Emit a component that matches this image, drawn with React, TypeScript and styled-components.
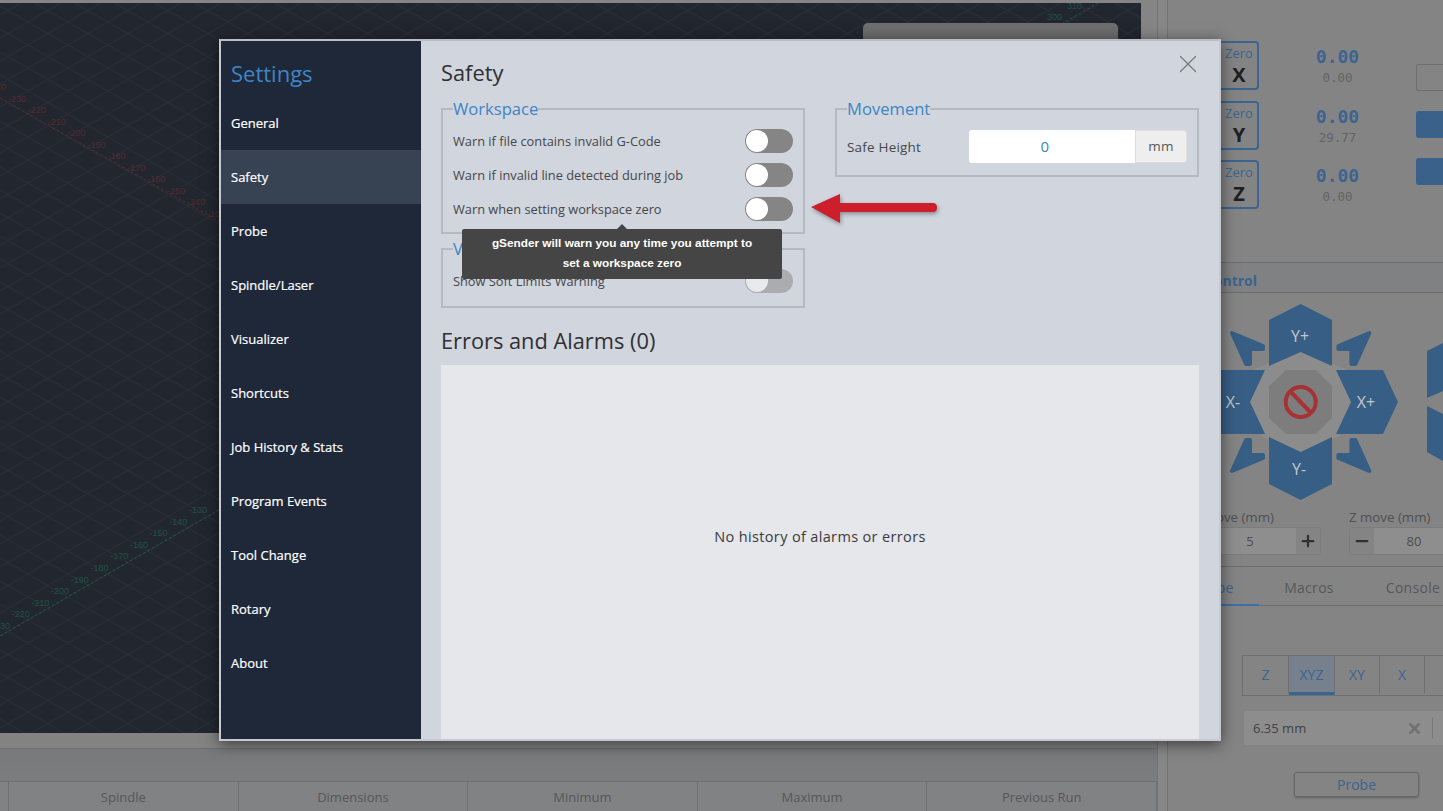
import React from 'react';
import styled, { createGlobalStyle } from 'styled-components';
import { Minus, Plus, X } from 'lucide-react';

const GlobalStyle = createGlobalStyle`
    * {
        box-sizing: border-box;
    }
    html, body {
        margin: 0;
        padding: 0;
        height: 811px;
        overflow: hidden;
        font-family: 'Open Sans', 'Liberation Sans', sans-serif;
    }
`;

const Page = styled.div`
    position: relative;
    display: grid;
    grid-template-columns: 1157px 11px 275px;
    width: 1443px;
    height: 811px;
    overflow: hidden;
    background: #848484;
`;

const MainColumn = styled.div`
    display: flex;
    flex-direction: column;
    height: 811px;
`;

const VisualizerRow = styled.div`
    display: flex;
    height: 733px;
    padding-top: 3px;
    padding-right: 16px;
    background: #858585;
`;

const Visualizer = styled.div`
    position: relative;
    width: 1141px;
    height: 730px;
    background: #22262f;
`;

const Canvas = styled.svg`
    display: block;
    width: 1141px;
    height: 730px;
`;

const FileCard = styled.div`
    position: absolute;
    top: 20px;
    left: 863px;
    width: 255px;
    height: 60px;
    border-radius: 5px;
    background: linear-gradient(#6f6f70, #5b5c5e);
`;

const StatusStrip = styled.div`
    height: 16px;
    background: #838383;
    border-bottom: 1px solid #6d6e70;
`;

const ProgressStrip = styled.div`
    height: 33px;
    background: linear-gradient(#78797b, #7c7d7f);
    border-bottom: 1px solid #6f7072;
`;

const StatsHeader = styled.div`
    display: grid;
    grid-template-columns: 9px repeat(5, 1fr);
    height: 29px;
    background: #818284;
`;

const StatsCell = styled.div`
    display: flex;
    align-items: center;
    justify-content: center;
    border-right: 1px solid #707173;
    font-size: 13px;
    color: #565759;
`;

const Splitter = styled.div`
    background: #878787;
    border-left: 1px solid #737476;
    border-right: 1px solid #737476;
`;

const SidePanel = styled.div`
    display: flex;
    flex-direction: column;
    overflow: hidden;
    height: 811px;
    background: #848485;
`;

const DroSection = styled.div`
    display: grid;
    grid-template-columns: 248px 27px;
    height: 263px;
    padding-top: 41px;
    border-bottom: 1px solid #6c6d6f;
`;

const DroRows = styled.div`
    display: grid;
    grid-template-rows: 60px 59px 48px;
`;

const DroRow = styled.div`
    display: grid;
    grid-template-columns: 91px 157px;
    align-items: start;
`;

const ZeroButton = styled.div`
    display: flex;
    flex-direction: column;
    align-items: center;
    justify-content: center;
    height: 49px;
    border: 2px solid #3b6490;
    border-radius: 4px;
    padding-left: 51px;
    color: #3b6490;
    font-size: 13px;
    line-height: 19px;
`;

const ZeroAxis = styled.span`
    color: #1f2021;
    font-size: 20px;
    font-weight: 700;
    line-height: 24px;
`;

const DroValues = styled.div`
    display: flex;
    flex-direction: column;
    align-items: center;
    padding-top: 4px;
    font-family: 'DejaVu Sans Mono', 'Liberation Mono', monospace;
`;

const WorkValue = styled.span`
    color: #3b6490;
    font-size: 18px;
    font-weight: 700;
    line-height: 24px;
`;

const MachineValue = styled.span`
    color: #626364;
    font-size: 12.5px;
    line-height: 18px;
`;

const DroActions = styled.div`
    display: flex;
    flex-direction: column;
    gap: 20px;
    padding-top: 23px;
`;

const DroAction = styled.div<{ $filled?: boolean }>`
    height: 27px;
    border-radius: 3px 0 0 3px;
    border: 1px solid ${(p) => (p.$filled ? '#3a6189' : '#6e6f71')};
    border-right: none;
    background: ${(p) => (p.$filled ? '#3a6189' : 'transparent')};
`;

const JogHeader = styled.div`
    height: 30px;
    padding: 8px 0 0 12px;
    border-bottom: 1px solid #6c6d6f;
    font-size: 14px;
    font-weight: 700;
    line-height: 20px;
    color: #3b6490;
    background: #808183;
`;

const JogPad = styled.svg`
    display: block;
    width: 275px;
    height: 215px;
`;

const MoveRow = styled.div`
    display: grid;
    grid-template-columns: 153px 1fr;
    column-gap: 28px;
    height: 59px;
    border-bottom: 1px solid #6c6d6f;
`;

const MoveField = styled.div`
    display: flex;
    flex-direction: column;
`;

const MoveLabel = styled.div<{ $inset?: number }>`
    height: 19px;
    padding-left: ${(p) => p.$inset ?? 0}px;
    font-size: 13.3px;
    line-height: 18px;
    white-space: nowrap;
    color: #4f5052;
`;

const Stepper = styled.div<{ $offset?: number; $width: number }>`
    display: flex;
    flex-shrink: 0;
    align-items: center;
    width: ${(p) => p.$width}px;
    height: 28px;
    margin-left: ${(p) => p.$offset ?? 0}px;
    border: 1px solid #7b7c7e;
    border-radius: 3px;
    background: #8e8e8f;
    color: #4c4d4e;
    font-size: 13px;
`;

const StepValue = styled.div`
    flex: 1;
    text-align: center;
`;

const StepButton = styled.div`
    display: flex;
    align-items: center;
    justify-content: center;
    width: 24px;
    height: 26px;
    background: #848485;
    color: #2f3031;
`;

const Tabs = styled.div`
    display: grid;
    grid-template-columns: 91px 100px 108px;
    height: 39px;
    border-bottom: 1px solid #6c6d6f;
`;

const Tab = styled.div<{ $active?: boolean }>`
    display: flex;
    align-items: center;
    justify-content: center;
    height: 39px;
    padding-top: 4px;
    font-size: 14px;
    letter-spacing: 0.3px;
    color: ${(p) => (p.$active ? '#3b6490' : '#565759')};
    border-bottom: 2px solid ${(p) => (p.$active ? '#3b6fa6' : 'transparent')};
`;

const ProbePanel = styled.div`
    display: flex;
    flex-direction: column;
    padding: 49px 0 0 74px;
`;

const AxisGroup = styled.div`
    display: grid;
    grid-template-columns: 46px 46px 45px 45px 45px;
    height: 41px;
    width: 227px;
    border: 1px solid #6e6f71;
`;

const AxisOption = styled.div<{ $active?: boolean }>`
    display: flex;
    align-items: center;
    justify-content: center;
    font-size: 14px;
    color: #3b6490;
    border-right: 1px solid #6e6f71;
    background: ${(p) => (p.$active ? '#76818d' : 'transparent')};
    border-bottom: 3px solid ${(p) => (p.$active ? '#3b6490' : 'transparent')};
`;

const ToolSelect = styled.div`
    display: flex;
    align-items: center;
    justify-content: space-between;
    width: 240px;
    height: 36px;
    margin-top: 14px;
    margin-left: 1px;
    padding-left: 9px;
    border-radius: 3px;
    background: #8d8d8e;
    border: 1px solid #838385;
    font-size: 13px;
    color: #414243;
`;

const ToolClear = styled.span`
    display: flex;
    align-items: center;
    height: 22px;
    margin-right: 49px;
    padding: 0 9px 0 10px;
    border-right: 1px solid #77787a;
    color: #707173;
`;

const ProbeButton = styled.div`
    display: flex;
    align-items: center;
    justify-content: center;
    width: 125px;
    height: 25px;
    margin: 26px 0 0 52px;
    border: 1px solid #66676a;
    border-radius: 3px;
    color: #3b6490;
    font-size: 14px;
    box-shadow: 0 1px 2px rgba(0, 0, 0, 0.25);
`;

const Backdrop = styled.div`
    position: absolute;
    inset: 0;
    padding: 39px 0 0 219px;
`;

const Modal = styled.div`
    display: grid;
    grid-template-columns: 200px 1fr;
    width: 1002px;
    height: 702px;
    border: 2px solid #c6c9cf;
    border-top-color: #b9bdc4;
    background: #d1d5dd;
    box-shadow: 0 3px 14px rgba(0, 0, 0, 0.55);
`;

const Sidebar = styled.nav`
    display: flex;
    flex-direction: column;
    background: #1e2839;
`;

const SidebarTitle = styled.div`
    height: 55px;
    padding: 15px 0 0 10px;
    font-size: 22px;
    line-height: 34px;
    color: #3e85c6;
`;

const NavItem = styled.div<{ $active?: boolean }>`
    display: flex;
    align-items: center;
    height: 54px;
    padding-left: 10px;
    font-size: 13px;
    font-weight: 400;
    color: #ffffff;
    -webkit-text-stroke: 0.2px #ffffff;
    background: ${(p) => (p.$active ? '#374253' : 'transparent')};
`;

const Content = styled.div`
    position: relative;
    display: flex;
    flex-direction: column;
    padding: 0 20px;
    overflow: hidden;
    min-width: 0;
`;

const CloseButton = styled.div`
    position: absolute;
    top: 8px;
    right: 16px;
    display: flex;
    color: #77797d;
`;

const Heading = styled.h2`
    margin: 0;
    font-size: 21.8px;
    font-weight: 400;
    line-height: 30px;
    color: #2f3033;
`;

const SafetyTitle = styled(Heading)`
    margin-top: 17px;
`;

const ErrorsTitle = styled(Heading)`
    margin-top: 18px;
    height: 39px;
`;

const SettingsGrid = styled.div`
    display: grid;
    grid-template-columns: 364px 364px;
    column-gap: 30px;
    margin-top: 9px;
`;

const SettingsColumn = styled.div`
    display: flex;
    flex-direction: column;
    gap: 3px;
`;

const Group = styled.fieldset`
    margin: 0;
    padding: 0 10px;
    border: 2px solid #b5b9c1;
    min-width: 0;
`;

const GroupLegend = styled.legend`
    padding: 0;
    font-size: 16.6px;
    line-height: 24px;
    color: #3e85c6;
`;

const SwitchRow = styled.div`
    position: relative;
    display: flex;
    align-items: center;
    justify-content: space-between;
    height: 34px;
    font-size: 12.8px;
    color: #45474a;
`;

const SwitchList = styled.div<{ $bottom: number }>`
    display: flex;
    flex-direction: column;
    padding: 3px 0 ${(p) => p.$bottom}px;
`;

const Toggle = styled.div<{ $muted?: boolean }>`
    display: flex;
    align-items: center;
    width: 48px;
    height: 24px;
    padding: 0 1px;
    border-radius: 12px;
    background: #858585;
    opacity: ${(p) => (p.$muted ? 0.5 : 1)};
`;

const Knob = styled.span`
    width: 22px;
    height: 22px;
    border-radius: 50%;
    background: #ffffff;
`;

const Tooltip = styled.div`
    position: absolute;
    z-index: 2;
    top: 37px;
    left: 9px;
    width: 320px;
    height: 50px;
    padding: 4px 26px;
    border-radius: 2px;
    background: #454545;
    color: #ffffff;
    font-family: 'Liberation Sans', Arial, sans-serif;
    font-size: 11.8px;
    font-weight: 700;
    line-height: 20px;
    text-align: center;

    &::before {
        content: '';
        position: absolute;
        top: -5px;
        left: 155px;
        border-left: 5px solid transparent;
        border-right: 5px solid transparent;
        border-bottom: 5px solid #454545;
    }
`;

const HeightField = styled.div`
    display: grid;
    grid-template-columns: 122px 166px 52px;
    align-items: center;
    padding: 9px 0 12px;
    font-size: 13.5px;
    letter-spacing: 0.2px;
    color: #45474a;
`;

const HeightInput = styled.div`
    height: 33px;
    padding-right: 14px;
    line-height: 33px;
    text-align: center;
    font-size: 15px;
    color: #3e85c6;
    background: #ffffff;
    border-radius: 3px 0 0 3px;
`;

const HeightUnit = styled.div`
    height: 33px;
    line-height: 31px;
    text-align: center;
    color: #55575a;
    background: #eeeeee;
    border: 1px solid #dcdde0;
    border-radius: 0 3px 3px 0;
`;

const ErrorsPanel = styled.div`
    display: flex;
    flex: 1;
    align-items: center;
    justify-content: center;
    padding-bottom: 31px;
    background: #e5e7eb;
    color: #3a3b3d;
    font-size: 14.5px;
    letter-spacing: 0.35px;
`;

const Callout = styled.svg`
    position: absolute;
    top: 190px;
    left: 805px;
    filter: drop-shadow(1px 2px 2px rgba(0, 0, 0, 0.35));
`;

const NAV = [
    'General',
    'Safety',
    'Probe',
    'Spindle/Laser',
    'Visualizer',
    'Shortcuts',
    'Job History & Stats',
    'Program Events',
    'Tool Change',
    'Rotary',
    'About',
];

const DRO = [
    { axis: 'X', machine: '0.00' },
    { axis: 'Y', machine: '29.77' },
    { axis: 'Z', machine: '0.00' },
];

const AXIS_LABELS = ['240', '230', '220', '210', '200', '190', '180', '170', '160', '150', '140', '130'];

const GRID_STEP = 23;
const GRID_SLOPE = 0.575;

function GridLines() {
    const lines = [];
    for (let i = -40; i < 70; i++) {
        const down = i * GRID_STEP + 6;
        const up = i * GRID_STEP + 15;
        lines.push(<line key={`a${i}`} x1={0} y1={down} x2={1141} y2={down + 1141 * GRID_SLOPE} />);
        lines.push(<line key={`b${i}`} x1={0} y1={up} x2={1141} y2={up - 1141 * GRID_SLOPE} />);
    }
    return (
        <g stroke="#2c3039" strokeWidth={1}>
            {lines}
        </g>
    );
}

function VisualizerCanvas() {
    return (
        <Canvas viewBox="0 3 1141 730">
            <GridLines />
            <line x1={0} y1={98} x2={222} y2={223} stroke="#5d2a30" strokeWidth={1} strokeDasharray="3 2" />
            <g fontSize={9} fill="#55292f" fontFamily="Liberation Sans">
                {AXIS_LABELS.map((label, i) => (
                    <text key={label} x={-12 + i * 19.9} y={90 + i * 11.5}>
                        -{label}
                    </text>
                ))}
            </g>
            <line x1={0} y1={636} x2={1098} y2={3} stroke="#1f5a4f" strokeWidth={1} strokeDasharray="3 2" />
            <g fontSize={9} fill="#1f5147" fontFamily="Liberation Sans">
                {AXIS_LABELS.slice(1).map((label, i) => (
                    <text key={label} x={-8 + i * 19.7} y={629 - i * 11.6}>
                        -{label}
                    </text>
                ))}
                <text x={1067} y={9}>310</text>
                <text x={1047} y={20}>300</text>
                <text x={1027} y={31}>290</text>
            </g>
        </Canvas>
    );
}

function CornerArrow({ transform }: { transform?: string }) {
    return (
        <path
            d="M1232 334 L1263 347 L1263 350 L1250 350 L1250 365 L1246 365 Z"
            transform={transform}
            fill="#375e85"
            stroke="#375e85"
            strokeWidth={4}
            strokeLinejoin="round"
        />
    );
}

function JogControls() {
    return (
        <JogPad viewBox="1168 294 275 215">
            <polygon points="1300.7,352 1351,372 1358,403 1338,438 1300.7,453 1263,438 1243,403 1250,372" fill="#8c8c8d" />
            <polygon points="1269,321 1300.7,305 1332,321 1332,367 1300.7,353 1269,367" fill="#375e85" />
            <polygon points="1269,438 1300.7,453 1332,438 1332,485 1300.7,501 1269,485" fill="#375e85" />
            <polygon points="1336,371 1383,371 1398,403 1383,435 1336,435 1351,403" fill="#375e85" />
            <polygon points="1265,371 1218,371 1203,403 1218,435 1265,435 1250,403" fill="#375e85" />
            <polygon points="1286,371 1316,371 1332,387 1332,419 1316,435 1286,435 1269,419 1269,387" fill="#7d7d7e" />
            <circle cx={1300.7} cy={403} r={15} fill="none" stroke="#a63236" strokeWidth={4} />
            <line x1={1290} y1={392} x2={1311} y2={414} stroke="#a63236" strokeWidth={4} />
            <CornerArrow />
            <CornerArrow transform="translate(2601.4 0) scale(-1 1)" />
            <CornerArrow transform="translate(0 806) scale(1 -1)" />
            <CornerArrow transform="translate(2601.4 806) scale(-1 -1)" />
            <polygon points="1427,352 1443,344 1443,392 1427,399" fill="#375e85" />
            <polygon points="1427,407 1443,415 1443,462 1427,453" fill="#375e85" />
            <g fill="#c3c7cc" fontFamily="Open Sans" fontSize={16} textAnchor="middle">
                <text x={1300} y={343}>Y+</text>
                <text x={1299} y={476}>Y-</text>
                <text x={1366} y={409}>X+</text>
                <text x={1233} y={409}>X-</text>
            </g>
        </JogPad>
    );
}

export default function App() {
    return (
        <Page>
            <GlobalStyle />
            <MainColumn>
                <VisualizerRow>
                    <Visualizer>
                        <VisualizerCanvas />
                        <FileCard />
                    </Visualizer>
                </VisualizerRow>
                <StatusStrip />
                <ProgressStrip />
                <StatsHeader>
                    <StatsCell />
                    <StatsCell>Spindle</StatsCell>
                    <StatsCell>Dimensions</StatsCell>
                    <StatsCell>Minimum</StatsCell>
                    <StatsCell>Maximum</StatsCell>
                    <StatsCell>Previous Run</StatsCell>
                </StatsHeader>
            </MainColumn>
            <Splitter />
            <SidePanel>
                <DroSection>
                    <DroRows>
                        {DRO.map((row) => (
                            <DroRow key={row.axis}>
                                <ZeroButton>
                                    Zero
                                    <ZeroAxis>{row.axis}</ZeroAxis>
                                </ZeroButton>
                                <DroValues>
                                    <WorkValue>0.00</WorkValue>
                                    <MachineValue>{row.machine}</MachineValue>
                                </DroValues>
                            </DroRow>
                        ))}
                    </DroRows>
                    <DroActions>
                        <DroAction />
                        <DroAction $filled />
                        <DroAction $filled />
                    </DroActions>
                </DroSection>
                <JogHeader>Jog Control</JogHeader>
                <JogControls />
                <MoveRow>
                    <MoveField>
                        <MoveLabel $inset={17}>XY move (mm)</MoveLabel>
                        <Stepper $offset={35} $width={118}>
                            <StepValue>5</StepValue>
                            <StepButton>
                                <Plus size={18} strokeWidth={3} />
                            </StepButton>
                        </Stepper>
                    </MoveField>
                    <MoveField>
                        <MoveLabel>Z move (mm)</MoveLabel>
                        <Stepper $width={106}>
                            <StepButton>
                                <Minus size={18} strokeWidth={3} />
                            </StepButton>
                            <StepValue>80</StepValue>
                        </Stepper>
                    </MoveField>
                </MoveRow>
                <Tabs>
                    <Tab $active>Probe</Tab>
                    <Tab>Macros</Tab>
                    <Tab>Console</Tab>
                </Tabs>
                <ProbePanel>
                    <AxisGroup>
                        <AxisOption>Z</AxisOption>
                        <AxisOption $active>XYZ</AxisOption>
                        <AxisOption>XY</AxisOption>
                        <AxisOption>X</AxisOption>
                        <AxisOption>Y</AxisOption>
                    </AxisGroup>
                    <ToolSelect>
                        6.35 mm
                        <ToolClear>
                            <X size={17} strokeWidth={3.5} />
                        </ToolClear>
                    </ToolSelect>
                    <ProbeButton>Probe</ProbeButton>
                </ProbePanel>
            </SidePanel>
            <Backdrop>
                <Modal>
                    <Sidebar>
                        <SidebarTitle>Settings</SidebarTitle>
                        {NAV.map((item) => (
                            <NavItem key={item} $active={item === 'Safety'}>
                                {item}
                            </NavItem>
                        ))}
                    </Sidebar>
                    <Content>
                        <CloseButton>
                            <X size={30} strokeWidth={1} />
                        </CloseButton>
                        <SafetyTitle>Safety</SafetyTitle>
                        <SettingsGrid>
                            <SettingsColumn>
                                <Group>
                                    <GroupLegend>Workspace</GroupLegend>
                                    <SwitchList $bottom={6}>
                                        <SwitchRow>
                                            Warn if file contains invalid G-Code
                                            <Toggle>
                                                <Knob />
                                            </Toggle>
                                        </SwitchRow>
                                        <SwitchRow>
                                            Warn if invalid line detected during job
                                            <Toggle>
                                                <Knob />
                                            </Toggle>
                                        </SwitchRow>
                                        <SwitchRow>
                                            Warn when setting workspace zero
                                            <Toggle>
                                                <Knob />
                                            </Toggle>
                                            <Tooltip>gSender will warn you any time you attempt to set a workspace zero</Tooltip>
                                        </SwitchRow>
                                    </SwitchList>
                                </Group>
                                <Group>
                                    <GroupLegend>Visualizer</GroupLegend>
                                    <SwitchList $bottom={8}>
                                        <SwitchRow>
                                            Show Soft Limits Warning
                                            <Toggle $muted>
                                                <Knob />
                                            </Toggle>
                                        </SwitchRow>
                                    </SwitchList>
                                </Group>
                            </SettingsColumn>
                            <div>
                                <Group>
                                    <GroupLegend>Movement</GroupLegend>
                                    <HeightField>
                                        Safe Height
                                        <HeightInput>0</HeightInput>
                                        <HeightUnit>mm</HeightUnit>
                                    </HeightField>
                                </Group>
                            </div>
                        </SettingsGrid>
                        <ErrorsTitle>Errors and Alarms (0)</ErrorsTitle>
                        <ErrorsPanel>No history of alarms or errors</ErrorsPanel>
                    </Content>
                </Modal>
                <Callout width={140} height={36} viewBox="0 0 140 36">
                    <path d="M6 17 L35 4 L35 13 L128 13 Q132 13 132 17.5 Q132 22 128 22 L35 22 L35 33 Z" fill="#cc1f2b" />
                </Callout>
            </Backdrop>
        </Page>
    );
}
